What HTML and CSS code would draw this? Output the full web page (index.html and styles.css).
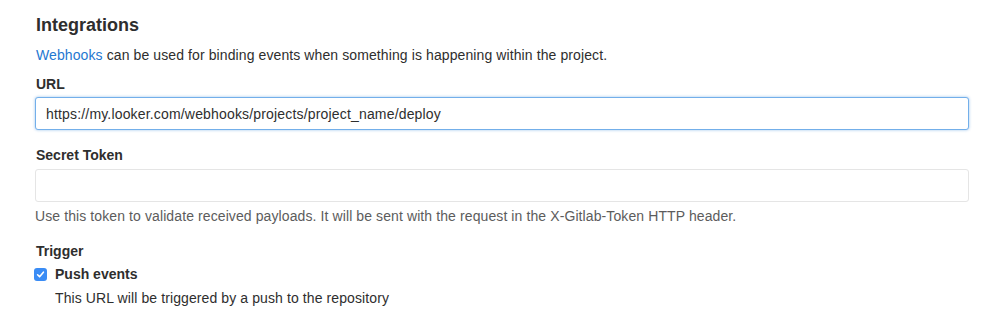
FILE: index.html
```html
<!DOCTYPE html>
<html lang="en">
<head>
  <meta charset="UTF-8" />
  <title>Integrations</title>
  <link rel="stylesheet" href="styles.css">
</head>
<body>
  <div class="settings">
    <h4 class="title">Integrations</h4>
    <p class="intro"><a href="#">Webhooks</a> can be used for binding events when something is happening within the project.</p>

    <div class="field">
      <label class="label" for="url">URL</label>
      <input type="text" id="url" class="input focused" value="https://my.looker.com/webhooks/projects/project_name/deploy" />
    </div>

    <div class="field">
      <label class="label" for="token">Secret Token</label>
      <input type="text" id="token" class="input" />
      <p class="help">Use this token to validate received payloads. It will be sent with the request in the X-Gitlab-Token HTTP header.</p>
    </div>

    <div class="field trigger">
      <div class="label">Trigger</div>
      <label class="check-row">
        <span class="checkbox">
          <svg width="9" height="9" viewBox="0 0 9 9"><path d="M1.6 4.8 L3.6 6.8 L7.4 2.2" fill="none" stroke="#fff" stroke-width="1.6" stroke-linecap="round" stroke-linejoin="round"/></svg>
        </span>
        <strong>Push events</strong>
      </label>
      <p class="check-help">This URL will be triggered by a push to the repository</p>
    </div>
  </div>
</body>
</html>
```

FILE: styles.css
```css
* {
  box-sizing: border-box;
  margin: 0;
  padding: 0;
}

body {
  background: #fff;
  color: #2e2e2e;
  font-family: 'Liberation Sans', Arial, sans-serif;
  font-size: 14px;
  line-height: 20px;
}

.settings {
  padding: 15px 30px 0 35px;
}

.title {
  font-size: 18px;
  line-height: 20px;
  font-weight: 700;
  margin-left: 1px;
}

.intro {
  margin: 10px 0 0 1px;
  letter-spacing: 0.1px;
}

.intro a {
  color: #1f78d1;
  text-decoration: none;
}

.field {
  margin-top: 9px;
}

.field + .field {
  margin-top: 15px;
}

.label {
  display: block;
  font-weight: 700;
  margin: 0 0 3px 1px;
}

.input {
  display: block;
  width: 934px;
  height: 33px;
  padding: 0 10px;
  border: 1px solid #e5e5e5;
  border-radius: 3px;
  font-family: inherit;
  font-size: 14px;
  letter-spacing: 0.17px;
  color: #2e2e2e;
  background: #fff;
  outline: none;
}

.input.focused {
  border-color: #73afea;
  box-shadow: 0 0 3px rgba(31, 120, 209, 0.45);
}

#token {
  margin-top: 4px;
}

.help {
  color: #5c5c5c;
  margin-top: 4px;
  letter-spacing: 0.1px;
}

.field.trigger {
  margin-top: 15px;
}

.check-row {
  display: flex;
  align-items: center;
  margin-top: 3px;
}

.checkbox {
  width: 13px;
  height: 13px;
  border-radius: 3px;
  background: #3a8cf5;
  display: flex;
  align-items: center;
  justify-content: center;
  margin: 0 8px 0 -1px;
}

.check-row strong {
  font-weight: 700;
}

.check-help {
  margin: 4px 0 0 20px;
  color: #2e2e2e;
  letter-spacing: 0.1px;
}
```
